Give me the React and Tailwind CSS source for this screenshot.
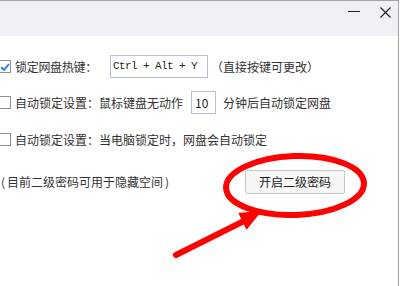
import { useState } from 'react';

function Box({ checked, onClick }) {
  return (
    <span
      onClick={onClick}
      className="-ml-[2px] mr-[4px] flex h-[13px] w-[13px] shrink-0 items-center justify-center border border-[#8f8f8f] bg-white"
    >
      {checked && (
        <svg width="10" height="10" viewBox="0 0 10 10">
          <path d="M1.2 5.2 L4 8 L9 2" fill="none" stroke="#1a73e8" strokeWidth="1.8" />
        </svg>
      )}
    </span>
  );
}

export default function App() {
  const [hotkey, setHotkey] = useState(true);
  const [idle, setIdle] = useState(false);
  const [onLock, setOnLock] = useState(false);

  return (
    <div
      className="relative h-[286px] w-[400px] overflow-hidden bg-white text-[12px] text-[#333]"
      style={{ fontFamily: '"Noto Sans CJK SC", "Noto Sans", sans-serif' }}
    >
      <div className="h-[286px] w-[399px] border-t border-r border-[#a3a3a3]">
        <div className="flex h-[35px] items-start justify-end bg-[#eef0f5]">
          <button className="mr-[20px] mt-[10px] h-px w-[12px] bg-[#222]" />
          <button className="mr-[7px] mt-[6px]">
            <svg width="11" height="11" viewBox="0 0 11 11">
              <path d="M0.5 0.5 L10.5 10.5 M10.5 0.5 L0.5 10.5" stroke="#222" strokeWidth="1.2" />
            </svg>
          </button>
        </div>

        <div className="mt-[19px] flex h-[23px] items-center leading-none">
          <Box checked={hotkey} onClick={() => setHotkey(!hotkey)} />
          <span className="tracking-[-0.3px]">锁定网盘热键：</span>
          <div className="ml-[13px] flex h-[23px] w-[98px] items-center border border-[#b3c1d1] pl-[2px] font-['Liberation_Mono',monospace] text-[11px] tracking-[-0.6px] text-[#222]">
            Ctrl + Alt + Y
          </div>
          <span className="ml-[3px]">（直接按键可更改）</span>
        </div>

        <div className="mt-[13px] flex h-[23px] items-center leading-none">
          <Box checked={idle} onClick={() => setIdle(!idle)} />
          <span>自动锁定设置：鼠标键盘无动作</span>
          <div className="ml-[8px] flex h-[23px] w-[25px] items-center border border-[#b3c1d1] pl-[3px] text-[12px] text-[#222]">
            10
          </div>
          <span className="ml-[7px]">分钟后自动锁定网盘</span>
        </div>

        <div className="mt-[14px] flex h-[23px] items-center leading-none">
          <Box checked={onLock} onClick={() => setOnLock(!onLock)} />
          <span>自动锁定设置：当电脑锁定时，网盘会自动锁定</span>
        </div>

        <div className="mt-[19px] flex h-[24px] items-center leading-none">
          <span className="ml-px">(</span>
          <span className="ml-[2px]">目前二级密码可用于隐藏空间</span>
          <span className="ml-[2px]">)</span>
          <button className="ml-auto mr-[53px] h-[24px] w-[100px] rounded-[2px] border border-[#c9c9c9] bg-[#f6f6f6] text-[12px] text-[#222]">
            开启二级密码
          </button>
        </div>
      </div>

      <svg className="pointer-events-none absolute left-0 top-0" width="400" height="286" viewBox="0 0 400 286">
        <ellipse cx="295" cy="185.5" rx="69" ry="29.5" fill="none" stroke="#ff0000" strokeWidth="6" transform="rotate(-2 295 185.5)" />
        <line x1="176" y1="255" x2="246" y2="220" stroke="#ff0000" strokeWidth="6" strokeLinecap="round" />
        <polygon points="260,212 246.6,228.5 239.4,213.5" fill="#ff0000" stroke="#ff0000" strokeWidth="1.5" strokeLinejoin="round" />
      </svg>
    </div>
  );
}
